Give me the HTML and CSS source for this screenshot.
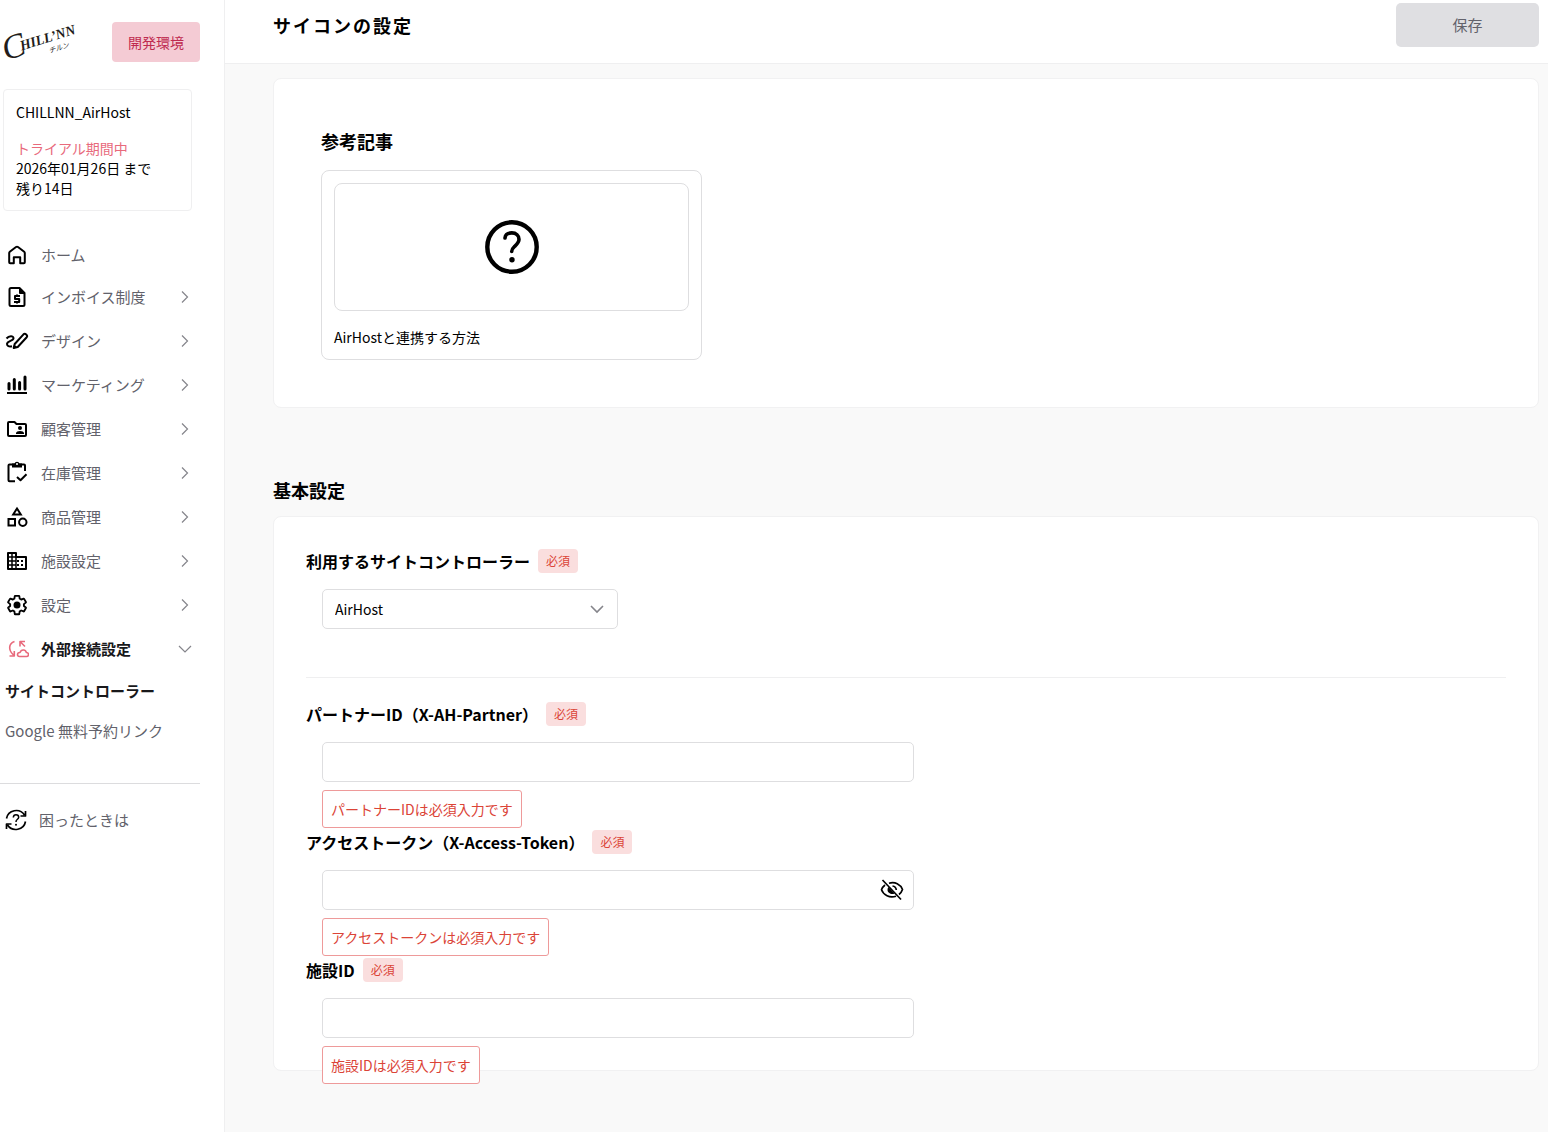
FILE: index.html
```
<!DOCTYPE html>
<html lang="ja">
<head>
    <meta charset="UTF-8">
    <meta name="viewport" content="width=device-width, initial-scale=1.0">
    <title>サイコンの設定</title>
    <link rel="stylesheet" href="styles.css">
</head>
<body>
    <!-- chevrons shared by the menu and the select -->
    <svg class="sprite" aria-hidden="true">
        <symbol id="chevron-right" viewBox="0 0 16 16"><path d="M5 2.5 L10.5 8 L5 13.5"/></symbol>
        <symbol id="chevron-down" viewBox="0 0 16 16"><path d="M2 5 L8 11 L14 5"/></symbol>
    </svg>

    <aside class="sidebar">
        <div class="brand">
            <svg class="logo" viewBox="0 0 76 52" role="img" aria-label="CHILLNN">
                <g transform="rotate(-17 4 42)">
                    <text class="logo-big" x="2" y="44">C</text>
                    <text class="logo-name" x="20" y="39">HILL’NN</text>
                    <text class="logo-kana" x="46" y="50">チルン</text>
                </g>
            </svg>
            <span class="env">開発環境</span>
        </div>

        <div class="company">
            <p class="company-name">CHILLNN_AirHost</p>
            <p class="trial">トライアル期間中</p>
            <p>2026年01月26日 まで</p>
            <p>残り14日</p>
        </div>

        <nav class="menu">
            <a class="menu-item home" href="#">
                <svg class="icon line" viewBox="0 0 24 24"><path d="M4.2 10 Q4.2 9.3 4.8 8.8 L11 4 Q12 3.300 13 4 L19.200 8.800 Q19.800 9.300 19.800 10 V19.300 Q19.800 20.300 18.800 20.300 H15.200 V14.200 H8.800 V20.300 H5.200 Q4.200 20.300 4.200 19.300 Z"/></svg>
                <span>ホーム</span>
            </a>
            <button class="menu-item" type="button">
                <svg class="icon line" viewBox="0 0 24 24"><path d="M5.500 3 H14.500 L19.500 8 V19.500 Q19.500 21 18 21 H6 Q4.500 21 4.500 19.500 V4.500 Q4.500 3 6 3"/><path class="solid" d="M14 3 L20 9 H15 Q14 9 14 8 Z"/><path d="M15 11 H10 V14 H14.200 V17 H9 M12 9.500 V11 M12 17 V18.500"/></svg>
                <span>インボイス制度</span>
                <svg class="chevron"><use href="#chevron-right"/></svg>
            </button>
            <button class="menu-item" type="button">
                <svg class="icon line" viewBox="0 0 24 24"><path d="M1.500 9.500 C4 6.500 8.500 6.500 8.500 9.200 C8.500 12 2 11.800 2 15 C2 17 4 18 7 17.200"/><path d="M9.700 15 L18.500 5.300 Q19.700 4.100 21.200 5.400 Q22.800 6.900 21.700 8.200 L12.700 18 L8.700 19 Z"/><path class="solid" d="M9 15.500 L12 18 L8 20 Z"/></svg>
                <span>デザイン</span>
                <svg class="chevron"><use href="#chevron-right"/></svg>
            </button>
            <button class="menu-item" type="button">
                <svg class="icon bars" viewBox="0 0 24 24"><path d="M4 10.500 V16 M9.300 6.500 V16 M14.600 9.500 V16 M20 4 V16"/><path class="base" d="M2 20 H22"/></svg>
                <span>マーケティング</span>
                <svg class="chevron"><use href="#chevron-right"/></svg>
            </button>
            <button class="menu-item" type="button">
                <svg class="icon line" viewBox="0 0 24 24"><path d="M4 5 H9.500 L11.500 7 H20 Q21 7 21 8 V18 Q21 19 20 19 H4 Q3 19 3 18 V6 Q3 5 4 5 Z"/><circle class="solid" cx="15" cy="11" r="2"/><path class="solid" d="M11 17 V16 Q11.500 14 15 14 Q18.500 14 19 16 V17 Z"/></svg>
                <span>顧客管理</span>
                <svg class="chevron"><use href="#chevron-right"/></svg>
            </button>
            <button class="menu-item" type="button">
                <svg class="icon line" viewBox="0 0 24 24"><path d="M10 20.300 H4.500 Q3.500 20.300 3.500 19.300 V4.500 Q3.500 3.500 4.500 3.500 H19 Q20 3.500 20 4.500 V10"/><path class="solid" d="M7 2.500 H9.500 Q10 .7 12 .7 Q14 .7 14.500 2.500 H17 V6.500 H7 Z"/><circle class="hole" cx="12" cy="3" r="1"/><path d="M12 16 L15.500 19.300 L21.500 13.300"/></svg>
                <span>在庫管理</span>
                <svg class="chevron"><use href="#chevron-right"/></svg>
            </button>
            <button class="menu-item" type="button">
                <svg class="icon line sharp" viewBox="0 0 24 24"><path d="M12 3.500 L15.800 9.500 H8.200 Z"/><rect x="3.500" y="14" width="6.500" height="6.500"/><circle cx="17.800" cy="17.300" r="3.700"/></svg>
                <span>商品管理</span>
                <svg class="chevron"><use href="#chevron-right"/></svg>
            </button>
            <button class="menu-item" type="button">
                <svg class="icon line" viewBox="0 0 24 24"><path d="M3 4 H11 V8 H21 V20 H3 Z"/><path class="thin" d="M7 4 V20 M11 8 V20 M3 8 H11 M3 12 H11 M3 16 H11"/><path class="solid" d="M12 11 h2 v2 h-2z M12 15 h2 v2 h-2z M16 11 h2 v2 h-2z M16 15 h2 v2 h-2z"/></svg>
                <span>施設設定</span>
                <svg class="chevron"><use href="#chevron-right"/></svg>
            </button>
            <button class="menu-item" type="button">
                <svg class="icon line" viewBox="0 0 24 24"><path transform="translate(1 1) scale(.92)" d="M19.430 12.980c.04-.32.07-.64.07-.98 0-.34-.03-.66-.07-.98l2.110-1.650c.19-.15.24-.42.12-.64l-2-3.460c-.09-.16-.26-.25-.44-.25-.06 0-.12.01-.17.03l-2.490 1c-.52-.4-1.080-.73-1.690-.98l-.38-2.650C14.460 2.180 14.250 2 14 2h-4c-.25 0-.46.18-.49.42l-.38 2.650c-.61.25-1.170.59-1.690.98l-2.490-1c-.06-.02-.12-.03-.18-.03-.17 0-.34.09-.43.25l-2 3.460c-.13.22-.07.49.12.64l2.110 1.650c-.04.32-.07.65-.07.98 0 .33.03.66.07.98l-2.110 1.650c-.19.15-.24.42-.12.64l2 3.460c.09.16.26.25.44.25.06 0 .12-.01.17-.03l2.490-1c.52.4 1.080.73 1.690.98l.38 2.650c.03.24.24.42.49.42h4c.25 0 .46-.18.49-.42l.38-2.650c.61-.25 1.170-.59 1.690-.98l2.490 1c.06.02.12.03.18.03.17 0 .34-.09.43-.25l2-3.460c.12-.22.07-.49-.12-.64l-2.110-1.650z"/><circle class="solid" cx="12" cy="12" r="3.500"/></svg>
                <span>設定</span>
                <svg class="chevron"><use href="#chevron-right"/></svg>
            </button>
            <button class="menu-item active" type="button" aria-expanded="true">
                <svg class="icon line accent" viewBox="0 0 24 24"><path d="M9.500 4.500 C3.500 6.500 3 13 8.500 18 M4.500 19 H9.300 V14"/><path d="M15 9.500 V4.500 H20 M15.200 4.700 L20 9.500"/><path d="M14.500 19.500 Q12.500 19.500 12.500 17.500 Q12.500 15.700 15 15.500 Q16 12.800 18.500 13 Q21 13.200 21.300 15.500 Q23.500 15.700 23.500 17.500 Q23.500 19.500 21.500 19.500 Z"/></svg>
                <span>外部接続設定</span>
                <svg class="chevron"><use href="#chevron-down"/></svg>
            </button>
            <a class="menu-sub active" href="#">サイトコントローラー</a>
            <a class="menu-sub" href="#">Google 無料予約リンク</a>
        </nav>

        <a class="help" href="#">
            <svg class="icon line fine" viewBox="0 0 24 24"><path d="M2.500 10.500 C4 2 15.500 -.5 20.500 7 M21.500 3 V8 H16.500"/><path d="M21.500 13.500 C20 22 8.500 24.500 3.500 17 M2.500 21 V16 H7.500"/><path class="thin" d="M9.300 9.500 Q9.500 6.800 12 6.800 Q14.700 6.800 14.700 9.300 Q14.700 10.500 13.200 11.500 Q12 12.300 12 14"/><circle class="solid" cx="12" cy="16.700" r="1"/></svg>
            <span>困ったときは</span>
        </a>
    </aside>

    <div class="page">
        <header class="topbar">
            <h1>サイコンの設定</h1>
            <button class="save" type="button">保存</button>
        </header>

        <main class="content">
            <section class="card articles">
                <h2>参考記事</h2>
                <a class="article" href="#">
                    <span class="thumb">
                        <svg viewBox="0 0 54 54" width="54" height="54"><circle cx="27" cy="27" r="24.700"/><path class="mark" d="M20 18 C20.300 14.800 23 12.900 26.800 12.900 C31.200 12.900 34 15.700 34 19.300 C34 22.500 32 24.200 29.700 26.300 C27.500 28.400 26.700 29.500 26.700 31.500"/><circle class="dot" cx="27" cy="39.700" r="2.700"/></svg>
                    </span>
                    <span class="article-title">AirHostと連携する方法</span>
                </a>
            </section>

            <h2 class="section-title">基本設定</h2>
            <form class="card settings">
                <div class="field">
                    <div class="field-head">
                        <label for="controller">利用するサイトコントローラー</label>
                        <span class="required">必須</span>
                    </div>
                    <div class="control select-box">
                        <select id="controller">
                            <option>AirHost</option>
                        </select>
                        <svg class="chevron"><use href="#chevron-down"/></svg>
                    </div>
                </div>
                <hr>
                <div class="field">
                    <div class="field-head">
                        <label for="partner">パートナーID（X-AH-Partner）</label>
                        <span class="required">必須</span>
                    </div>
                    <div class="control">
                        <input type="text" id="partner">
                        <p class="error">パートナーIDは必須入力です</p>
                    </div>
                </div>
                <div class="field">
                    <div class="field-head">
                        <label for="token">アクセストークン（X-Access-Token）</label>
                        <span class="required">必須</span>
                    </div>
                    <div class="control">
                        <input type="password" id="token">
                        <button class="reveal" type="button" aria-label="表示">
                            <svg class="icon line" viewBox="0 0 24 24"><path d="M9 5.300 C15 3.300 20.500 6.500 22.500 11.500 Q21.500 14.500 19 16.500 M16 18.200 C9.500 20.500 3.500 17 1.500 11.700 Q2.500 9 5 7"/><path class="solid" d="M8.500 9 L14.500 15.500 C11.500 17 7.500 15 7.500 12 Q7.500 10 8.500 9 Z"/><path d="M12.500 8 Q16 8.500 16.300 12"/><path d="M2.500 2 L21 21.500"/></svg>
                        </button>
                        <p class="error">アクセストークンは必須入力です</p>
                    </div>
                </div>
                <div class="field">
                    <div class="field-head">
                        <label for="facility">施設ID</label>
                        <span class="required">必須</span>
                    </div>
                    <div class="control">
                        <input type="text" id="facility">
                        <p class="error">施設IDは必須入力です</p>
                    </div>
                </div>
            </form>
        </main>
    </div>
</body>
</html>
```
FILE: styles.css
```
* {
    box-sizing: border-box;
}
body {
    margin: 0;
    display: flex;
    min-height: 100vh;
    font-family: "Noto Sans CJK JP", "Noto Sans", sans-serif;
    font-size: 14px;
    line-height: 20px;
    color: #000;
    background: #f9f9f9;
}
h1, h2, p {
    margin: 0;
}
a {
    color: inherit;
    text-decoration: none;
}
button, input, select {
    font: inherit;
    color: inherit;
}
hr {
    margin: 0;
    border: none;
    border-top: 1px solid #efeff0;
}
.sprite {
    display: none;
}
.icon {
    width: 24px;
    height: 24px;
    flex-shrink: 0;
}
.line {
    fill: none;
    stroke: #000;
    stroke-width: 2;
    stroke-linejoin: round;
}
.line .solid {
    fill: #000;
    stroke: none;
}
.line .hole {
    fill: #fff;
    stroke: none;
}
.line .thin {
    stroke-width: 1.5;
}
.line.fine {
    stroke-width: 1.7;
}
.line.sharp {
    stroke-linejoin: miter;
}
.line.accent {
    stroke: #e86a7c;
    stroke-width: 1.6;
}
.bars {
    stroke: #000;
    stroke-width: 3;
    stroke-linecap: round;
}
.bars .base {
    stroke-width: 2;
    stroke-linecap: butt;
}
.chevron {
    width: 16px;
    height: 16px;
    flex-shrink: 0;
    fill: none;
    stroke: #85858b;
    stroke-width: 1.2;
}

/* sidebar */
.sidebar {
    width: 225px;
    flex-shrink: 0;
    padding-right: 24px;
    background: #fff;
    border-right: 1px solid #efeff0;
}
.brand {
    display: flex;
    justify-content: space-between;
    align-items: center;
    padding: 16px 0 0 3px;
}
.logo {
    width: 76px;
    height: 52px;
    overflow: visible;
    font-family: "Liberation Serif", serif;
    font-style: italic;
    fill: #221c1a;
}
.logo-big {
    font-size: 34px;
}
.logo-name {
    font-size: 14px;
    font-weight: bold;
}
.logo-kana {
    font-family: "Noto Sans CJK JP", sans-serif;
    font-size: 7px;
}
.env {
    padding: 10px 16px;
    border-radius: 4px;
    background: #f4cbd4;
    color: #bf2a50;
}
.company {
    margin: 21px 8px 24px 3px;
    padding: 12px;
    border: 1px solid #efeff0;
    border-radius: 4px;
}
.company-name {
    margin-bottom: 16px;
}
.trial {
    color: #e86a7c;
}
.menu {
    display: flex;
    flex-direction: column;
    padding-bottom: 32px;
    border-bottom: 1px solid #dcdcde;
    font-size: 15px;
    color: #62626b;
}
.menu-item {
    display: flex;
    align-items: center;
    gap: 12px;
    height: 44px;
    padding: 0 7px 0 5px;
    border: none;
    background: none;
    text-align: left;
    cursor: pointer;
}
.menu-item.home {
    height: 40px;
}
.menu-item span {
    flex-grow: 1;
}
.menu-sub {
    padding: 10px 5px;
}
.menu .active {
    color: #18181b;
    font-weight: bold;
}
.help {
    display: flex;
    align-items: center;
    gap: 11px;
    margin-top: 16px;
    padding: 8px 4px;
    font-size: 15px;
    line-height: 24px;
    color: #62626b;
}

/* page */
.page {
    flex-grow: 1;
    min-width: 0;
}
.topbar {
    display: flex;
    justify-content: space-between;
    padding: 3px 9px 16px 48px;
    background: #fff;
    border-bottom: 1px solid #efeff0;
}
.topbar h1 {
    font-size: 18px;
    line-height: 44px;
    letter-spacing: 2px;
}
.save {
    width: 143px;
    height: 44px;
    border: none;
    border-radius: 5px;
    background: #dfdfe2;
    color: #62626b;
    font-size: 15px;
}
.content {
    padding: 14px 9px 60px 48px;
}
.card {
    background: #fff;
    border: 1px solid #f1f1f2;
    border-radius: 8px;
}
.content h2 {
    font-size: 18px;
    line-height: 28px;
}
.articles {
    padding: 48px 47px 47px;
}
.articles h2 {
    margin-bottom: 15px;
}
.article {
    display: flex;
    flex-direction: column;
    gap: 16px;
    max-width: 381px;
    padding: 12px;
    border: 1px solid #dedee0;
    border-radius: 8px;
}
.thumb {
    display: flex;
    align-items: center;
    justify-content: center;
    height: 128px;
    border: 1px solid #dedee0;
    border-radius: 8px;
}
.thumb svg {
    fill: none;
    stroke: #000;
    stroke-width: 4.4;
    stroke-linecap: round;
}
.thumb .mark {
    stroke-width: 3.6;
}
.thumb .dot {
    fill: #000;
    stroke: none;
}
.section-title {
    margin: 68px 0 12px;
}

/* form */
.settings {
    display: flex;
    flex-direction: column;
    gap: 48px;
    padding: 32px;
}
.settings hr + .field {
    margin-top: -24px;
}
.field-head {
    display: flex;
    align-items: center;
    gap: 8px;
    margin-bottom: 16px;
}
.field-head label {
    font-size: 16px;
    line-height: 24px;
    font-weight: bold;
}
.required {
    padding: 0 8px;
    border-radius: 4px;
    background: #fadede;
    color: #db4437;
    font-size: 12px;
    line-height: 24px;
}
.control {
    position: relative;
    max-width: 592px;
    margin-left: 16px;
}
.control input, .control select {
    display: block;
    width: 100%;
    height: 40px;
    padding: 0 12px;
    border: 1px solid #dedee0;
    border-radius: 5px;
    background: #fff;
}
.select-box {
    max-width: 296px;
}
.select-box select {
    appearance: none;
}
.select-box .chevron {
    position: absolute;
    right: 13px;
    top: 12px;
    stroke-width: 1.6;
    pointer-events: none;
}
.reveal {
    position: absolute;
    right: 10px;
    top: 8px;
    padding: 0;
    border: none;
    background: none;
    cursor: pointer;
}
.reveal .icon {
    display: block;
    stroke-width: 1.7;
}
/* message hangs below its input, over whatever comes next */
.error {
    position: absolute;
    left: 0;
    top: 48px;
    padding: 8px;
    border: 1px solid #ee9a9a;
    border-radius: 3px;
    background: #fff;
    color: #db4437;
    white-space: nowrap;
}
```
